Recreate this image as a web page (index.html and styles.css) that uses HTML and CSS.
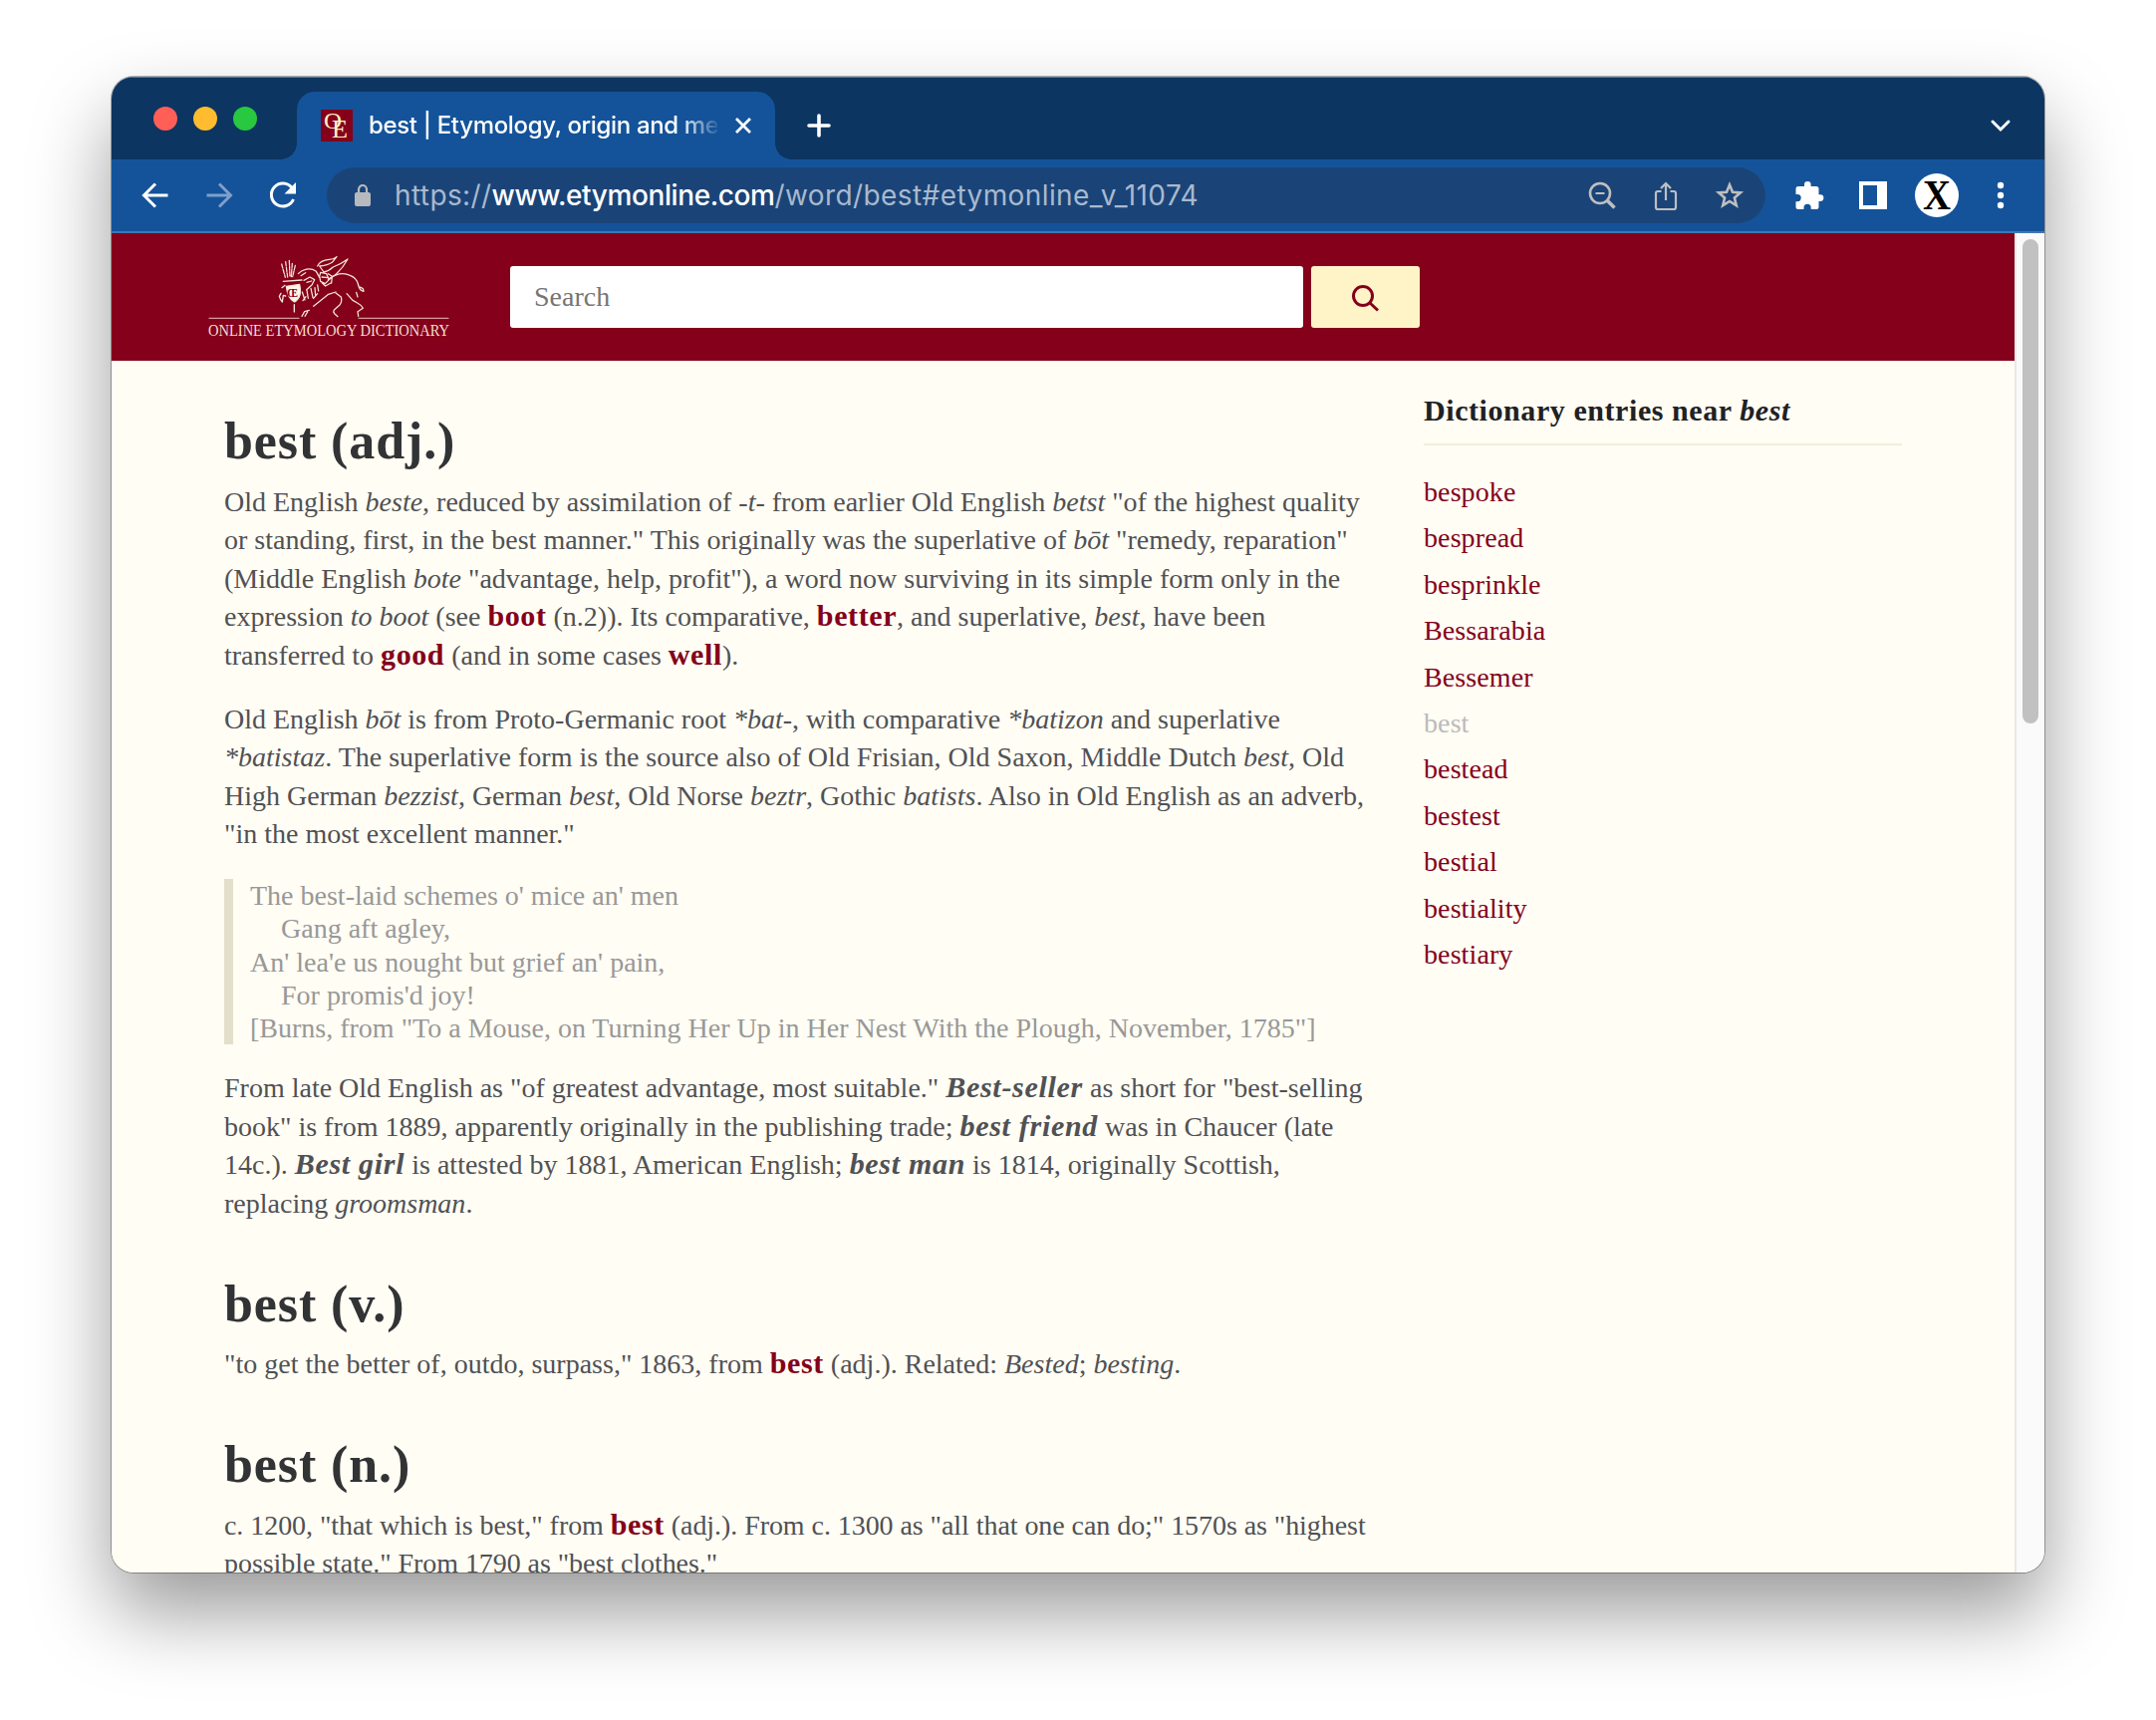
FILE: index.html
```html
<!DOCTYPE html>
<html lang="en">
<head>
<meta charset="utf-8">
<title>best | Etymology, origin and meaning</title>
<link rel="stylesheet" href="styles.css">
</head>
<body>
<div class="window">
  <div class="tabstrip">
    <div class="lights"><span class="light red"></span><span class="light amber"></span><span class="light green"></span></div>
    <div class="tab">
      <svg class="favicon" viewBox="0 0 32 32"><rect width="32" height="32" fill="#85001b"/><text x="3" y="19" font-size="24" textLength="18" lengthAdjust="spacingAndGlyphs">O</text><text x="11" y="28" font-size="25" textLength="16" lengthAdjust="spacingAndGlyphs">E</text></svg>
      <span class="tab-title">best | Etymology, origin and me</span>
      <svg class="close" viewBox="0 0 18 18"><path d="M2 2l14 14M16 2L2 16"/></svg>
    </div>
    <svg class="plus" viewBox="0 0 24 24"><path d="M12 2v20M2 12h20"/></svg>
    <svg class="chevron" viewBox="0 0 20 14"><path d="M2 3l8 8 8-8"/></svg>
  </div>
  <div class="toolbar">
    <div class="nav">
      <svg viewBox="0 0 32 32"><path d="M28.500 16H5M16 4.500L4.500 16 16 27.500"/></svg>
      <svg class="dim" viewBox="0 0 32 32"><path d="M3.500 16H27M16 4.500L27.500 16 16 27.500"/></svg>
      <svg viewBox="0 0 32 32"><path d="M26.500 20A11.500 11.500 0 1 1 25 8.500"/><path class="solid" d="M29 3v11.500H17.500z"/></svg>
    </div>
    <div class="omnibox">
      <svg class="lock" viewBox="0 0 16 22"><path d="M4 9V5a4 4 0 0 1 8 0v4" fill="none" stroke="#b7babd" stroke-width="2.200"/><rect y="8" width="16" height="14" rx="2" fill="#b7babd"/></svg>
      <span class="url">https://<span class="host">www.etymonline.com</span>/word/best#etymonline_v_11074</span>
      <div class="actions">
        <svg viewBox="0 0 32 32"><circle cx="14" cy="14" r="10"/><path d="M9.500 14h9" stroke-width="1.800"/><path d="M20.500 20.500l8 8" stroke-width="3.600"/></svg>
        <svg viewBox="0 0 32 32"><path d="M11.500 12H8a2 2 0 0 0-2 2v14a2 2 0 0 0 2 2h16a2 2 0 0 0 2-2V14a2 2 0 0 0-2-2h-3.500M16 21V4M11 9l5-5 5 5" stroke-width="2.200"/></svg>
        <svg viewBox="0 0 32 32"><path d="M16 5.500l3 7.300 7.900.6-6 5.100 1.900 7.700L16 22l-6.800 4.200 1.900-7.700-6-5.100 7.900-.6z"/></svg>
      </div>
    </div>
    <div class="extensions">
      <svg class="puzzle" viewBox="0 0 28 28"><path d="M3 5h6V3.300a3.300 3.300 0 0 1 6.600 0V5H21a2.500 2.500 0 0 1 2.500 2.500v5.700H25a3.400 3.400 0 0 1 0 6.800h-1.500v5.500A2.500 2.500 0 0 1 21 28h-5.300v-1.600a3.600 3.600 0 0 0-7.200 0V28H3a2.500 2.500 0 0 1-2.500-2.500v-5.300h1.600a3.600 3.600 0 0 0 0-7.200H.5V7.500A2.500 2.500 0 0 1 3 5z"/></svg>
      <svg class="panel" viewBox="0 0 28 28"><path fill-rule="evenodd" d="M0 0h28v28H0zM4 4v20h14V4z"/></svg>
      <svg class="avatar" viewBox="0 0 44 44"><circle cx="22" cy="22" r="22" fill="#fff"/><text x="8" y="36" textLength="28" lengthAdjust="spacingAndGlyphs">X</text></svg>
      <svg class="menu" viewBox="0 0 8 28"><circle cx="4" cy="4" r="3.200"/><circle cx="4" cy="14" r="3.200"/><circle cx="4" cy="24" r="3.200"/></svg>
    </div>
  </div>
  <div class="viewport">
    <div class="page">
      <header class="site-header">
        <svg class="logo" viewBox="0 0 242 88">
          <g transform="translate(67 0) scale(.33333)">
            <path d="M20 33l11 40M32 26l6 46M43 22l2 48M52 31l-3 40M61 37l-8 34" stroke-dasharray="13 4"/>
            <path d="M25 85l56-4" stroke-width="4"/>
            <path d="M34 100l40-6q6 26-2 40-8 12-14 13-20-12-24-47z" class="shield"/>
            <path d="M30 97l-9 7M18 121l-5 9q3 10 9 17l3-20 7 2M58 155v22" stroke-width="4"/>
            <path d="M70 62q10-10 20-12 18-6 34 5l10 18M78 68l14-9M87 82l18-10 14 8-8 16-16 14M96 88l14-4"/>
            <path d="M128 39q8-18 36-20 12 0 22-8l-14 17q-16 10-38 11l13 18q14-2 28-15 22-8 44-24-14 26-34 44l-20 16M137 58l18 4 8 18-12 12-14-7-3-15zM141 72l18 2M142 90l10 9 16-9M160 62l12 8-2 20"/>
            <path d="M82 117l8 24M96 112l4 24M108 106l6 28M120 104l2 24M128 96l3 18M84 143l9-12M116 136l12-14"/>
            <path d="M81 190l8-14 14-4M116 160l17-14 28-22 22-7M98 177l-8 13"/>
            <path d="M160 79q36-26 66-12 20 8 24 26 4 20 17 22l-2-8-9-5"/>
            <path d="M183 120l16 12q4 14-4 24l-17 15q-4 6 2 12l9 8M216 122l18 20 14 8q12 6 17 16l-16 10 2 14M245 118l4 14"/>
          </g>
          <text class="crest" x="79" y="44" textLength="11" lengthAdjust="spacingAndGlyphs">Œ</text>
          <path class="rule" d="M1 65.300h90M151 65.300h90"/>
          <text class="wordmark" x="0" y="83" textLength="242" lengthAdjust="spacingAndGlyphs">ONLINE ETYMOLOGY DICTIONARY</text>
        </svg>
        <div class="search">
          <div class="search-field">Search</div>
          <button class="search-button"><svg viewBox="0 0 28 28"><circle cx="12" cy="12" r="9.500"/><path d="M19 19l8 7.500"/></svg></button>
        </div>
      </header>
      <div class="columns">
        <main>
          <section>
            <h1>best (adj.)</h1>
            <p>Old English <i>beste</i>, reduced by assimilation of <i>-t-</i> from earlier Old English <i>betst</i> "of the highest quality<br>or standing, first, in the best manner." This originally was the superlative of <i>bōt</i> "remedy, reparation"<br>(Middle English <i>bote</i> "advantage, help, profit"), a word now surviving in its simple form only in the<br>expression <i>to boot</i> (see <a>boot</a> (n.2)). Its comparative, <a>better</a>, and superlative, <i>best</i>, have been<br>transferred to <a>good</a> (and in some cases <a>well</a>).</p>
            <p>Old English <i>bōt</i> is from Proto-Germanic root <i>*bat-</i>, with comparative <i>*batizon</i> and superlative<br><i>*batistaz</i>. The superlative form is the source also of Old Frisian, Old Saxon, Middle Dutch <i>best</i>, Old<br>High German <i>bezzist</i>, German <i>best</i>, Old Norse <i>beztr</i>, Gothic <i>batists</i>. Also in Old English as an adverb,<br>"in the most excellent manner."</p>
            <blockquote>The best-laid schemes o' mice an' men<br><span class="indent">Gang aft agley,</span><br>An' lea'e us nought but grief an' pain,<br><span class="indent">For promis'd joy!</span><br>[Burns, from "To a Mouse, on Turning Her Up in Her Nest With the Plough, November, 1785"]</blockquote>
            <p>From late Old English as "of greatest advantage, most suitable." <b>Best-seller</b> as short for "best-selling<br>book" is from 1889, apparently originally in the publishing trade; <b>best friend</b> was in Chaucer (late<br>14c.). <b>Best girl</b> is attested by 1881, American English; <b>best man</b> is 1814, originally Scottish,<br>replacing <i>groomsman</i>.</p>
          </section>
          <section>
            <h1>best (v.)</h1>
            <p>"to get the better of, outdo, surpass," 1863, from <a>best</a> (adj.). Related: <i>Bested</i>; <i>besting</i>.</p>
          </section>
          <section>
            <h1>best (n.)</h1>
            <p class="tight">c. 1200, "that which is best," from <a>best</a> (adj.). From c. 1300 as "all that one can do;" 1570s as "highest<br>possible state." From 1790 as "best clothes."</p>
          </section>
        </main>
        <aside>
          <h2>Dictionary entries near <i>best</i></h2>
          <ul>
            <li>bespoke</li><li>bespread</li><li>besprinkle</li><li>Bessarabia</li><li>Bessemer</li><li class="current">best</li><li>bestead</li><li>bestest</li><li>bestial</li><li>bestiality</li><li>bestiary</li>
          </ul>
        </aside>
      </div>
    </div>
    <div class="scrollbar"><div class="thumb"></div></div>
  </div>
</div>
</body>
</html>
```
FILE: styles.css
```css
* { box-sizing: border-box; }
body { margin: 0; height: 1726px; padding: 77px 112px 0; background: #fff; overflow: hidden; font-family: "Liberation Serif", serif; }
svg { display: block; flex: none; overflow: visible; }

.window {
  width: 1940px; height: 1501px; display: flex; flex-direction: column;
  border-radius: 22px; overflow: hidden; background: #fffdf4;
  box-shadow: 0 0 0 1px rgba(0,0,0,.3), 0 40px 80px rgba(0,0,0,.4);
}

/* Tab strip */
.tabstrip { height: 83px; flex: none; display: flex; background: #0c3561; padding: 15px 34px 0 42px; box-shadow: inset 0 1px #5d7ba0; }
.lights { display: flex; gap: 16px; padding-top: 15px; width: 144px; }
.light { width: 24px; height: 24px; border-radius: 50%; }
.red { background: #ff5f57; }
.amber { background: #febc2e; }
.green { background: #28c840; }
.tab { position: relative; width: 480px; height: 68px; display: flex; align-items: center; padding-left: 24px; background: #145399; border-radius: 18px 18px 0 0; }
.tab::before, .tab::after { content: ""; position: absolute; bottom: 0; width: 16px; height: 16px; }
.tab::before { left: -16px; background: radial-gradient(circle at 0 0, transparent 15.5px, #145399 16px); }
.tab::after { right: -16px; background: radial-gradient(circle at 100% 0, transparent 15.5px, #145399 16px); }
.favicon { width: 32px; height: 32px; fill: #fff4c8; }
.tab-title {
  margin-left: 16px; width: 350px; overflow: hidden; white-space: nowrap; font: 500 24px/34px Inter, sans-serif; letter-spacing: -.34px; color: #fff;
  -webkit-mask-image: linear-gradient(90deg, #000 312px, transparent 354px); mask-image: linear-gradient(90deg, #000 312px, transparent 354px);
}
.close { width: 18px; height: 18px; margin-left: 17px; fill: none; stroke: #fff; stroke-width: 2.800; }
.plus { width: 24px; height: 24px; margin: 22px 0 0 32px; fill: none; stroke: #fff; stroke-width: 3.600; stroke-linecap: round; }
.chevron { width: 20px; height: 14px; margin: 27px 0 0 auto; fill: none; stroke: #fff; stroke-width: 3; stroke-linecap: round; }

/* Toolbar */
.toolbar { height: 74px; flex: none; display: flex; align-items: center; padding: 0 40px 0 28px; background: #145399; border-bottom: 2px solid #4276b4; }
.nav { display: flex; gap: 32px; width: 188px; }
.nav svg { width: 32px; height: 32px; fill: none; stroke: #fff; stroke-width: 3; }
.nav .dim { stroke: #7f9fca; }
.nav .solid { fill: #fff; stroke: none; }
.omnibox { width: 1444px; height: 56px; border-radius: 28px; display: flex; align-items: center; padding: 0 20px 0 28px; background: #1a4478; }
.lock { width: 16px; height: 22px; }
.url { margin-left: 24px; font: 28px/40px Inter, sans-serif; letter-spacing: .4px; color: #a9b9ce; white-space: nowrap; }
.host { color: #fff; font-weight: 500; letter-spacing: -.4px; }
.actions { display: flex; gap: 32px; margin-left: auto; }
.actions svg { width: 32px; height: 32px; fill: none; stroke: #bfbfc0; stroke-width: 2.600; }
.extensions { display: flex; align-items: center; padding-left: 30px; fill: #fff; }
.puzzle, .panel { width: 28px; height: 28px; }
.panel { margin-left: 36px; }
.avatar { width: 44px; height: 44px; margin: 0 38px 0 28px; fill: #000; font-weight: bold; font-size: 42px; }
.menu { width: 8px; height: 28px; }

/* Page */
.viewport { flex: 1; min-height: 0; display: flex; }
.page { flex: 1; overflow: hidden; background: #fffdf4; }
.scrollbar { width: 30px; flex: none; padding: 6px 0 0 6px; border-left: 2px solid #e8e8e8; background: #fafafa; }
.thumb { width: 16px; height: 486px; border-radius: 8px; background: #c1c1c1; }
.site-header { height: 128px; display: flex; align-items: flex-start; background: #84001b; padding: 20px 0 0 97px; }
.logo { width: 242px; height: 88px; fill: none; stroke: #f6e4d4; stroke-width: 3.800; stroke-linecap: round; stroke-linejoin: round; }
.shield { fill: #fff6ea; }
.rule { stroke: #d79a9a; stroke-width: 1.300; }
.wordmark { font-size: 16px; fill: #f5dfd2; stroke: none; }
.crest { font-size: 13px; font-weight: bold; fill: #84001b; stroke: none; }
.search { display: flex; gap: 8px; margin: 13px 0 0 61px; }
.search-field { width: 796px; height: 62px; border-radius: 3px; background: #fff; padding-left: 24px; font-size: 28px; line-height: 62px; color: #757575; }
.search-button { width: 109px; height: 62px; border: 0; border-radius: 3px; background: #fff4c8; padding: 2px 2px 0 0; display: flex; align-items: center; justify-content: center; }
.search-button svg { width: 28px; height: 28px; fill: none; stroke: #84001b; stroke-width: 3; }

.columns { display: flex; padding: 54px 0 0 113px; }
main { width: 1204px; flex: none; font-size: 28px; line-height: 38.5px; color: #505155; white-space: nowrap; }
section { margin-bottom: 54.500px; }
h1 { margin: 0 0 14px; font-size: 52px; line-height: 54.500px; letter-spacing: .9px; color: #323335; }
p { margin: 0 0 25.500px; }
section p:last-child { margin-bottom: 0; }
.tight { letter-spacing: -.06px; }
a, b { font-weight: bold; font-size: 30px; line-height: 1; letter-spacing: .6px; }
a { color: #84001b; }
b { font-style: italic; letter-spacing: .7px; }
blockquote { margin: 0 0 25px; padding-left: 17px; border-left: 9px solid #e4dfcb; line-height: 33.3px; color: #989898; }
.indent { padding-left: 31px; }
aside { width: 480px; margin-top: -29px; }
h2 { margin: 0; height: 60px; border-bottom: 2px solid #f1eedb; font-size: 30px; line-height: 50px; letter-spacing: .57px; color: #202124; white-space: nowrap; }
ul { list-style: none; margin: 24px 0 0; padding: 0; font-size: 28px; line-height: 46.4px; letter-spacing: .1px; color: #84001b; }
.current { color: #bbb; }
```
